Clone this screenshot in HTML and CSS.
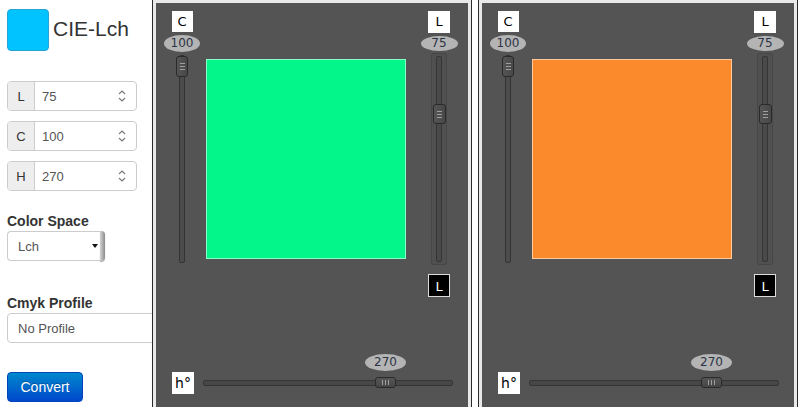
FILE: index.html
```html
<!DOCTYPE html>
<html>
<head>
<meta charset="utf-8">
<link rel="stylesheet" href="styles.css">
</head>
<body>
<div class="app">
  <aside class="side">
    <div class="brand"><div class="swatch"></div><h1>CIE-Lch</h1></div>
    <div class="field first"><span class="addon">L</span><span class="val">75</span><svg class="spin" width="8" height="14" viewBox="0 0 8 14"><path d="M1 5 L4 2 L7 5 M1 9 L4 12 L7 9" fill="none" stroke="#777" stroke-width="1.1"/></svg></div>
    <div class="field"><span class="addon">C</span><span class="val">100</span><svg class="spin" width="8" height="14" viewBox="0 0 8 14"><path d="M1 5 L4 2 L7 5 M1 9 L4 12 L7 9" fill="none" stroke="#777" stroke-width="1.1"/></svg></div>
    <div class="field"><span class="addon">H</span><span class="val">270</span><svg class="spin" width="8" height="14" viewBox="0 0 8 14"><path d="M1 5 L4 2 L7 5 M1 9 L4 12 L7 9" fill="none" stroke="#777" stroke-width="1.1"/></svg></div>
    <div class="lbl">Color Space</div>
    <div class="select small"><span class="sel-text">Lch</span><span class="caret"></span><span class="sel-btn"></span></div>
    <div class="lbl cmyk">Cmyk Profile</div>
    <div class="select wide"><span class="sel-text">No Profile</span></div>
    <button class="btn">Convert</button>
  </aside>

  <section class="panel">
    <div class="stage">
      <div class="top">
        <div class="vcol vcol-c">
          <div class="tag">C</div>
          <div class="bubble">100</div>
          <div class="vtrack thin"><div class="vhandle" style="top:0px"><i></i><i></i><i></i></div></div>
        </div>
        <div class="square" style="background:#02f68a"></div>
        <div class="vcol vcol-l">
          <div class="tag">L</div>
          <div class="bubble small">75</div>
          <div class="vtrack wide"><div class="groove"></div><div class="vhandle" style="top:50px"><i></i><i></i><i></i></div></div>
          <div class="tag dark">L</div>
        </div>
      </div>
      <div class="hrow">
        <div class="tag">h°</div>
        <div class="htrack">
          <div class="bubble hb" style="left:161px">270</div>
          <div class="hhandle" style="left:171px"><i></i><i></i><i></i></div>
        </div>
      </div>
    </div>
  </section>

  <section class="panel second">
    <div class="stage">
      <div class="top">
        <div class="vcol vcol-c">
          <div class="tag">C</div>
          <div class="bubble">100</div>
          <div class="vtrack thin"><div class="vhandle" style="top:0px"><i></i><i></i><i></i></div></div>
        </div>
        <div class="square" style="background:#fa8a2b"></div>
        <div class="vcol vcol-l">
          <div class="tag">L</div>
          <div class="bubble small">75</div>
          <div class="vtrack wide"><div class="groove"></div><div class="vhandle" style="top:50px"><i></i><i></i><i></i></div></div>
          <div class="tag dark">L</div>
        </div>
      </div>
      <div class="hrow">
        <div class="tag">h°</div>
        <div class="htrack">
          <div class="bubble hb" style="left:161px">270</div>
          <div class="hhandle" style="left:171px"><i></i><i></i><i></i></div>
        </div>
      </div>
    </div>
  </section>
</div>
</body>
</html>
```
FILE: styles.css
```css
html, body {
  margin: 0;
  padding: 0;
  background: #fff;
  overflow: hidden;
}
body {
  font-family: "Liberation Sans", Arial, sans-serif;
}
.app {
  display: flex;
  height: 407px;
  gap: 6px;
}
.side {
  width: 152px;
  flex: none;
  overflow: hidden;
  padding-left: 7px;
  box-sizing: border-box;
  margin-right: -6px;
}
.brand {
  display: flex;
  align-items: center;
  gap: 4px;
  margin-top: 9px;
}
.swatch {
  width: 42px;
  height: 42px;
  box-sizing: border-box;
  background: #00c3ff;
  border: 1px solid #28a4d4;
  border-radius: 4px;
}
.brand h1 {
  margin: -2px 0 0 0;
  font-size: 21px;
  font-weight: normal;
  color: #333;
  line-height: 20px;
}
.field {
  margin-top: 10px;
  width: 130px;
  height: 30px;
  box-sizing: border-box;
  border: 1px solid #ccc;
  border-radius: 4px;
  display: flex;
  align-items: center;
  font-size: 13px;
  color: #555;
  padding-right: 10px;
}
.field.first {
  margin-top: 30px;
}
.addon {
  width: 26px;
  align-self: stretch;
  background: #eee;
  border-right: 1px solid #ccc;
  border-radius: 3px 0 0 3px;
  display: flex;
  align-items: center;
  justify-content: center;
  color: #333;
}
.val {
  flex: 1;
  padding-left: 7px;
}
.spin {
  display: block;
}
.lbl {
  font-weight: bold;
  font-size: 14px;
  line-height: 20px;
  color: #333;
  margin-top: 20px;
}
.lbl.cmyk {
  margin-top: 32px;
}
.select {
  height: 30px;
  box-sizing: border-box;
  border: 1px solid #ccc;
  border-radius: 4px;
  display: flex;
  align-items: center;
  font-size: 13px;
  color: #555;
  padding-left: 10px;
}
.select.small {
  width: 98px;
  padding-right: 0;
  border-right: none;
}
.sel-text {
  flex: 1;
}
.caret {
  width: 0;
  height: 0;
  border-left: 3px solid transparent;
  border-right: 3px solid transparent;
  border-top: 4px solid #111;
  margin-right: 2px;
}
.sel-btn {
  align-self: stretch;
  width: 5px;
  margin-top: -1px;
  margin-bottom: -1px;
  border-radius: 0 4px 4px 0;
  background: linear-gradient(to right, #d6d6d6, #8a8a8a);
  box-shadow: 0 1px 1px #aaa;
}
.select.wide {
  width: 200px;
}
.btn {
  display: block;
  margin-top: 29px;
  width: 76px;
  height: 30px;
  box-sizing: border-box;
  border: 1px solid #0044bb;
  border-radius: 4px;
  background: linear-gradient(to bottom, #0088cc, #0048cc);
  color: #fff;
  font-family: "Liberation Sans", Arial, sans-serif;
  font-size: 14px;
  padding: 0;
  text-shadow: 0 -1px 0 rgba(0,0,0,0.25);
}

/* panels */
.panel {
  width: 320px;
  height: 420px;
  flex: none;
  box-sizing: border-box;
  border-left: 1px solid #2a2a2a;
  border-right: 1px solid #2a2a2a;
  background: #e9e9e9;
  padding: 3px 3px 0 3px;
}
.stage {
  background: #545454;
  height: 100%;
  box-sizing: border-box;
  padding: 8px 0 0 8px;
  font-family: "DejaVu Sans", sans-serif;
}
.top {
  display: flex;
  align-items: flex-start;
}
.vcol {
  display: flex;
  flex-direction: column;
  align-items: center;
}
.vcol-c {
  width: 36px;
}
.vcol-l {
  width: 38px;
  margin-left: 14px;
}
.tag {
  width: 21px;
  height: 21px;
  background: #fff;
  color: #000;
  font-size: 13px;
  line-height: 21px;
  text-align: center;
}
.vcol-l .tag {
  width: 22px;
  height: 22px;
  line-height: 22px;
}
.vcol-l .tag.dark {
  margin-top: 9px;
  height: 23px;
  line-height: 23px;
  background: #000;
  color: #fff;
  box-sizing: border-box;
  border: 1px solid #ddd;
}
.bubble {
  width: 36px;
  height: 17px;
  margin-top: 3px;
  border-radius: 50%;
  background: #b4b4b4;
  color: #2c3344;
  font-size: 12px;
  line-height: 17px;
  text-align: center;
}
.bubble.small {
  width: 37px;
  height: 15px;
  line-height: 15px;
}
.vtrack {
  position: relative;
  box-sizing: border-box;
}
.vtrack.thin {
  margin-top: 3px;
  width: 6px;
  height: 208px;
  border: 1px solid #333;
  border-radius: 2px;
  background: #4c4c4c;
}
.vtrack.wide {
  margin-top: 2px;
  width: 16px;
  height: 212px;
  border: 1px solid #474747;
  border-radius: 2px;
  background: #505050;
}
.groove {
  position: absolute;
  left: 4px;
  top: 2px;
  bottom: 2px;
  width: 6px;
  box-sizing: border-box;
  border: 1px solid #353535;
  border-radius: 2px;
  background: #4a4a4a;
}
.vhandle {
  position: absolute;
  left: 50%;
  width: 12px;
  height: 21px;
  margin-left: -6px;
  box-sizing: border-box;
  background: linear-gradient(to right, #555, #484848);
  border: 1px solid #2a2a2a;
  border-radius: 3px;
  display: flex;
  flex-direction: column;
  align-items: center;
  justify-content: center;
  gap: 2px;
}
.vtrack.wide .vhandle {
  width: 13px;
  height: 20px;
  margin-left: -6.5px;
}
.vhandle i {
  display: block;
  width: 5px;
  height: 1px;
  background: #a0a0a0;
}
.square {
  width: 200px;
  height: 200px;
  margin-left: 6px;
  margin-top: 48px;
  box-sizing: border-box;
  border: 1px solid rgba(255,255,255,0.55);
}
.hrow {
  display: flex;
  align-items: center;
  margin-top: 75px;
  padding-left: 8px;
}
.hrow .tag {
  width: 22px;
  height: 22px;
  line-height: 22px;
  font-size: 14px;
}
.htrack {
  position: relative;
  margin-left: 9px;
  width: 250px;
  height: 6px;
  box-sizing: border-box;
  border: 1px solid #353535;
  border-radius: 2px;
  background: #474747;
}
.bubble.hb {
  position: absolute;
  top: -27px;
  margin: 0;
  width: 41px;
  height: 17px;
}
.hhandle {
  position: absolute;
  top: -4px;
  width: 21px;
  height: 11px;
  box-sizing: border-box;
  background: linear-gradient(to bottom, #555, #464646);
  border: 1px solid #2a2a2a;
  border-radius: 3px;
  display: flex;
  align-items: center;
  justify-content: center;
  gap: 2px;
}
.hhandle i {
  display: block;
  width: 1px;
  height: 5px;
  background: #a0a0a0;
}
```
